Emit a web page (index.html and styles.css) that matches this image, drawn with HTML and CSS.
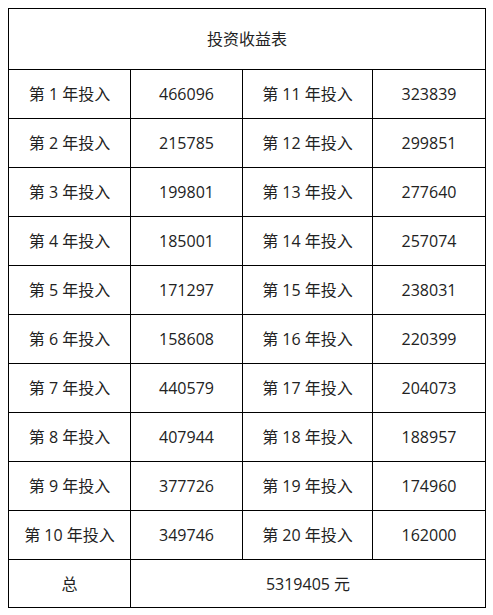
FILE: index.html
```html
<!DOCTYPE html>
<html lang="zh">
<head>
<meta charset="utf-8">
<link rel="stylesheet" href="styles.css">
</head>
<body>
<table class="sheet">
  <colgroup>
    <col class="c1"><col class="c2"><col class="c3"><col class="c4">
  </colgroup>
  <tr class="title-row"><td colspan="4">投资收益表</td></tr>
  <tr class="row"><td>第 1 年投入</td><td>466096</td><td>第 11 年投入</td><td>323839</td></tr>
  <tr class="row"><td>第 2 年投入</td><td>215785</td><td>第 12 年投入</td><td>299851</td></tr>
  <tr class="row"><td>第 3 年投入</td><td>199801</td><td>第 13 年投入</td><td>277640</td></tr>
  <tr class="row"><td>第 4 年投入</td><td>185001</td><td>第 14 年投入</td><td>257074</td></tr>
  <tr class="row"><td>第 5 年投入</td><td>171297</td><td>第 15 年投入</td><td>238031</td></tr>
  <tr class="row"><td>第 6 年投入</td><td>158608</td><td>第 16 年投入</td><td>220399</td></tr>
  <tr class="row"><td>第 7 年投入</td><td>440579</td><td>第 17 年投入</td><td>204073</td></tr>
  <tr class="row"><td>第 8 年投入</td><td>407944</td><td>第 18 年投入</td><td>188957</td></tr>
  <tr class="row"><td>第 9 年投入</td><td>377726</td><td>第 19 年投入</td><td>174960</td></tr>
  <tr class="row"><td>第 10 年投入</td><td>349746</td><td>第 20 年投入</td><td>162000</td></tr>
  <tr class="total-row"><td>总</td><td colspan="3">5319405 元</td></tr>
</table>
</body>
</html>
```
FILE: styles.css
```css
html, body {
  margin: 0;
  background: #fff;
}
body {
  padding: 8px;
  font-family: "Open Sans", "Noto Sans CJK SC", sans-serif;
  font-size: 16px;
  color: #222;
}
.sheet {
  border-collapse: collapse;
  table-layout: fixed;
  width: 477px;
}
.c1 { width: 122px; }
.c2 { width: 112px; }
.c3 { width: 130px; }
.c4 { width: 113px; }
.sheet td {
  border: 1px solid #000;
  text-align: center;
  vertical-align: middle;
  padding: 0;
  line-height: 20px;
}
.title-row td { height: 60px; }
.row td { height: 48px; }
.total-row td { height: 47px; }
```
